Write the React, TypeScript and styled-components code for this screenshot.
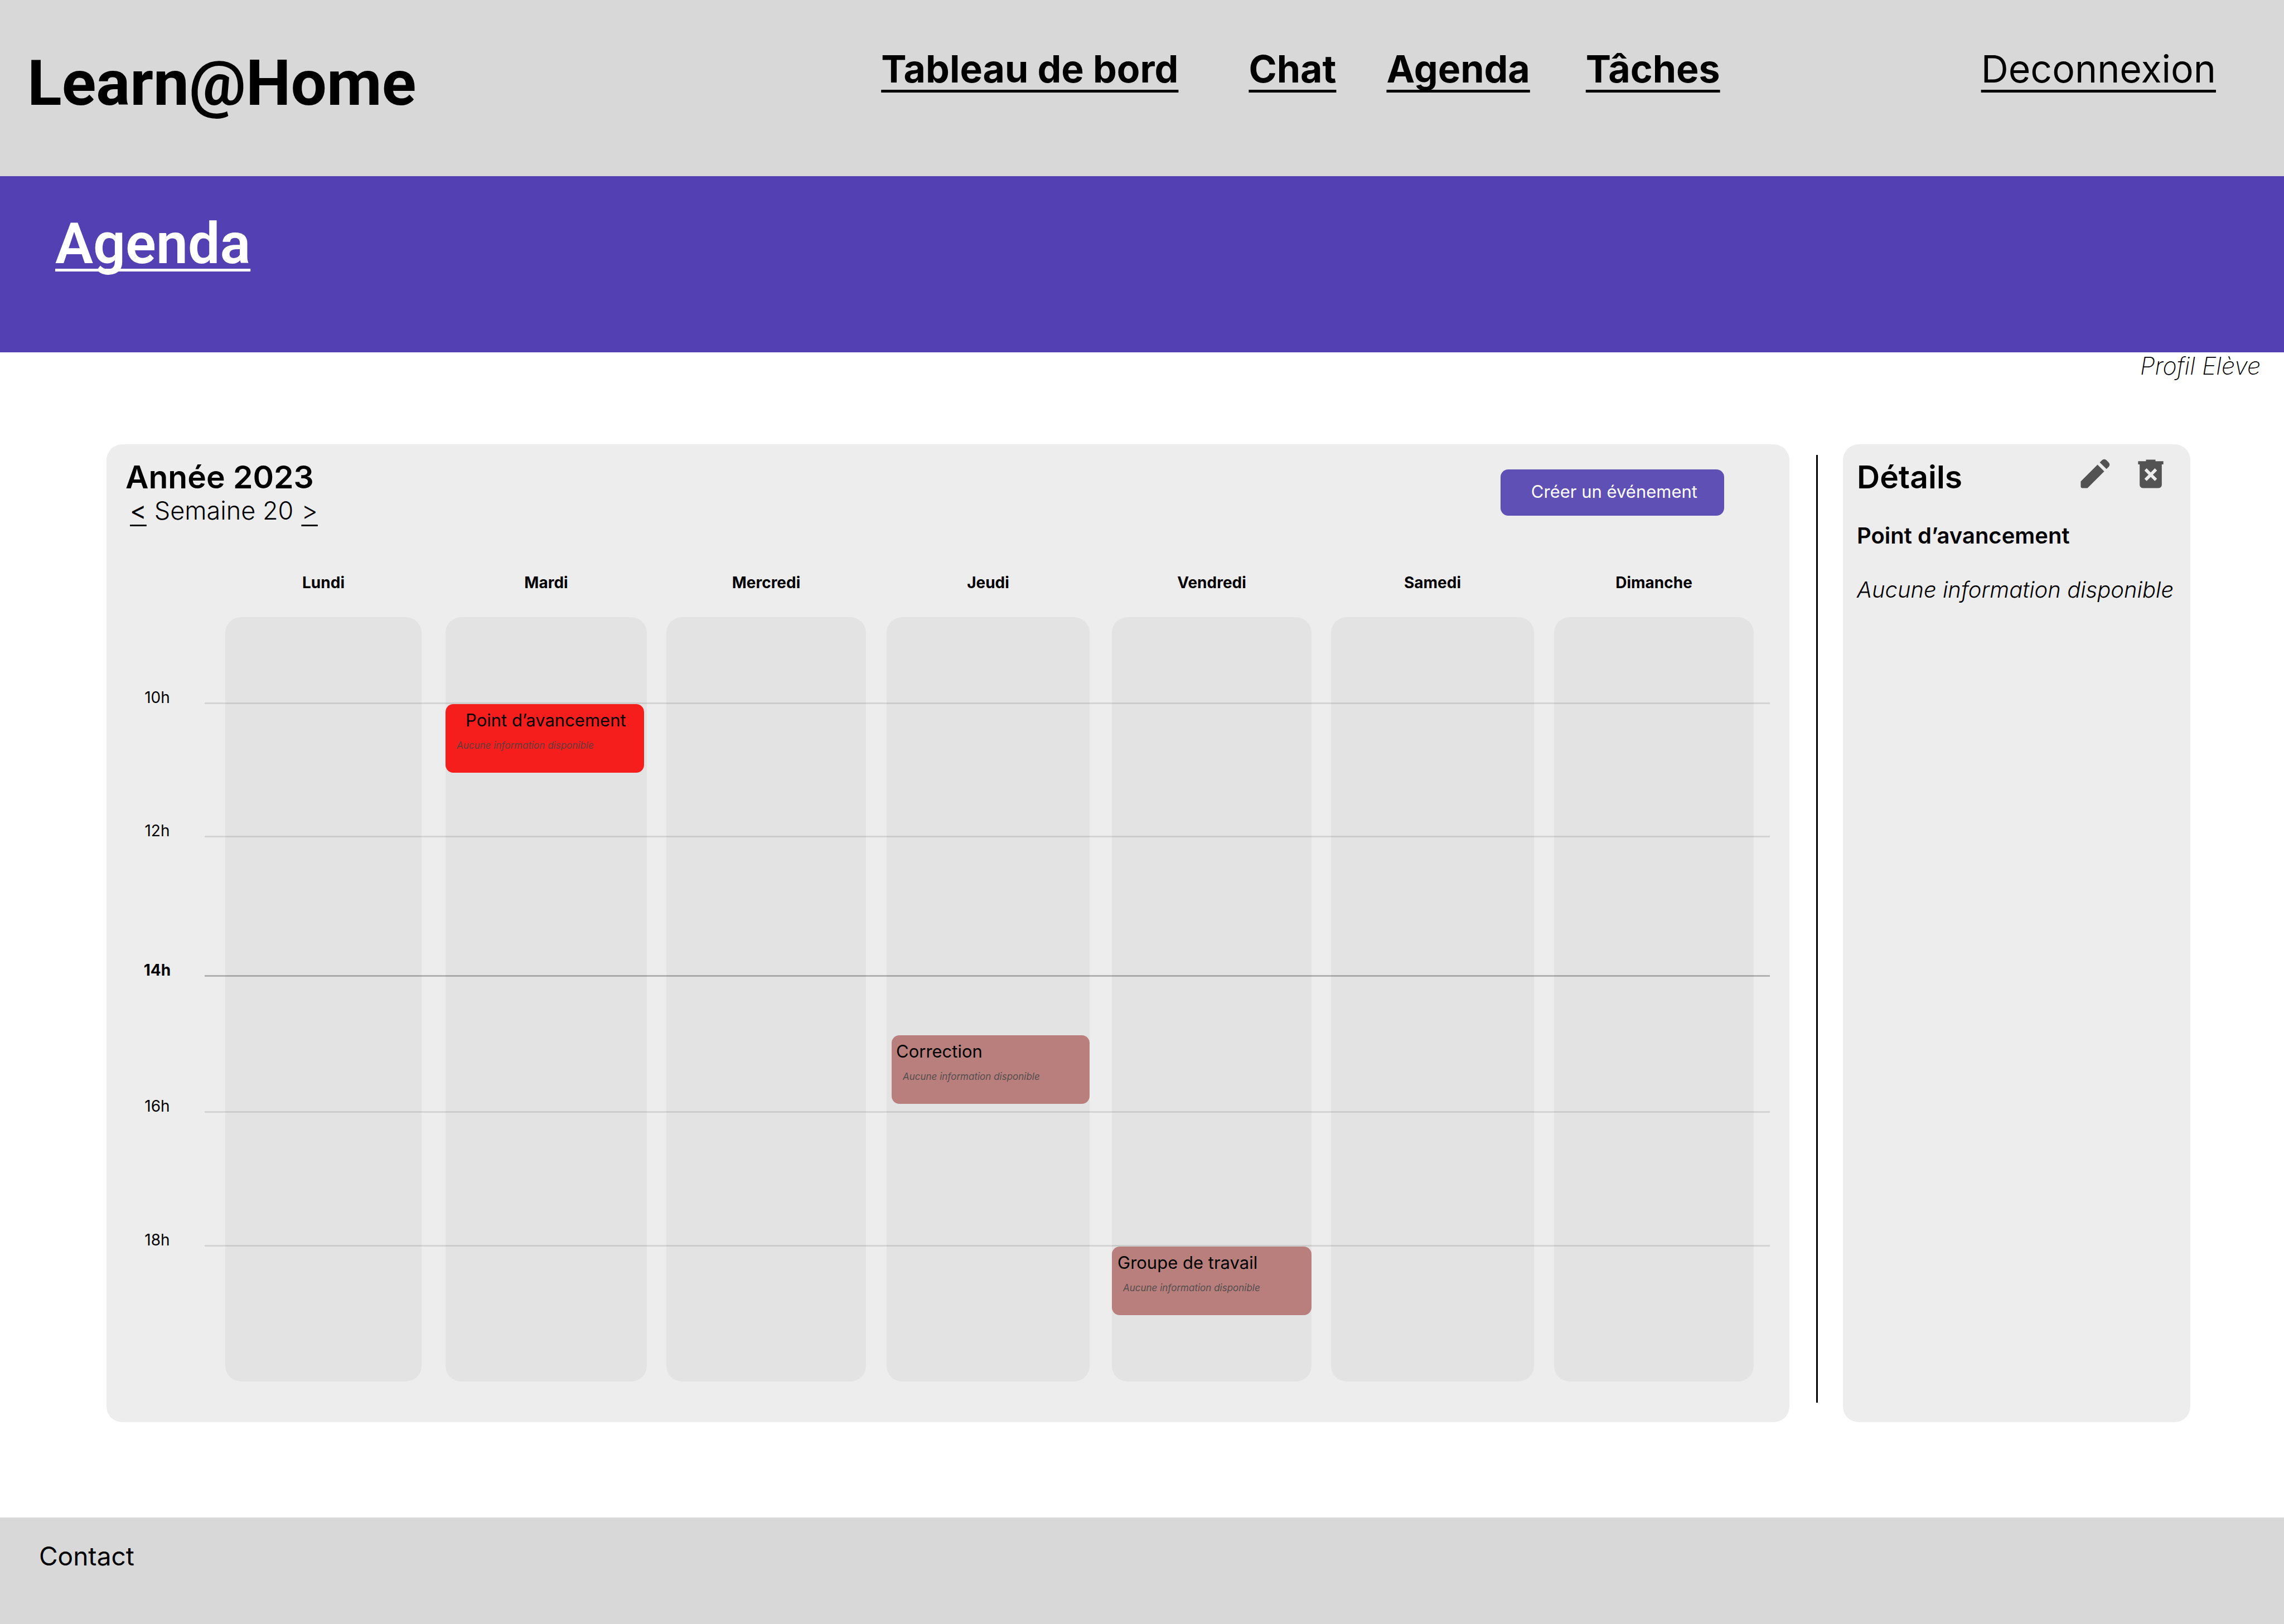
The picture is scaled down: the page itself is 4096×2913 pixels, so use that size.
import React from "react";
import styled, { createGlobalStyle } from "styled-components";

const GlobalStyle = createGlobalStyle`
  *, *::before, *::after { box-sizing: border-box; }
  html, body { margin: 0; padding: 0; }
  body {
    background: #ffffff;
    color: #000000;
    font-family: Inter, "Liberation Sans", sans-serif;
  }
  h1, h2, h3, p, ul, ol { margin: 0; padding: 0; }
  ul, ol { list-style: none; }
  a { color: inherit; }
  button { font: inherit; color: inherit; border: 0; background: none; padding: 0; cursor: pointer; }
`;

const Page = styled.div`
  display: flex;
  flex-direction: column;
  min-height: 100vh;
`;

const Header = styled.header`
  display: flex;
  align-items: flex-start;
  padding: 82px 122px 100px 49px;
  background: #d8d8d8;
`;

const Brand = styled.p`
  font-family: Roboto, sans-serif;
  font-size: 114px;
  line-height: 134px;
  font-weight: 700;
`;

const Nav = styled.nav`
  display: flex;
  margin-left: auto;
`;

const NavLink = styled.a<{ $before?: number; $plain?: boolean }>`
  margin-left: ${(p) => p.$before ?? 0}px;
  font-size: 68px;
  line-height: 82px;
  font-weight: ${(p) => (p.$plain ? 400 : 700)};
  text-decoration: underline;
  text-decoration-thickness: 5px;
  text-decoration-skip-ink: none;
  text-underline-offset: 13px;
  white-space: nowrap;
`;

const Banner = styled.div`
  padding: 61px 99px 135px;
  background: #5341b3;
  color: #ffffff;
`;

const BannerTitle = styled.h1`
  font-family: Roboto, sans-serif;
  font-size: 102px;
  line-height: 120px;
  font-weight: 600;
  text-decoration: underline;
  text-decoration-thickness: 5px;
  text-decoration-skip-ink: none;
  text-underline-offset: 10px;
`;

const Main = styled.main`
  flex: 1;
  display: flex;
  flex-direction: column;
  padding-bottom: 171px;
`;

const Profile = styled.p`
  padding-right: 42px;
  font-size: 43px;
  line-height: 48px;
  font-weight: 200;
  font-style: italic;
  text-align: right;
`;

const Planner = styled.div`
  display: flex;
  margin: 117px 168px 0 191px;
`;

const Panel = styled.section`
  border-radius: 28px;
  background: #ededed;
`;

const Calendar = styled(Panel)`
  flex: 1;
  min-width: 0;
  padding-bottom: 73px;
`;

const Divider = styled.div`
  width: 3px;
  margin: 19px 45px 35px 48px;
  background: #000000;
`;

const Toolbar = styled.div`
  display: flex;
  justify-content: space-between;
  align-items: flex-start;
  padding: 24px 117px 0 34px;
`;

const PanelTitle = styled.h2`
  font-size: 57px;
  line-height: 70px;
  font-weight: 600;
`;

const Week = styled.div`
  display: flex;
  gap: 14px;
  padding-left: 8px;
  font-size: 45px;
  line-height: 50px;
  font-weight: 300;
`;

const WeekButton = styled.button<{ $strong?: boolean }>`
  font-weight: ${(p) => (p.$strong ? 400 : 300)};
  text-decoration: underline;
  text-decoration-thickness: 3px;
  text-underline-offset: 9px;
`;

const CreateButton = styled.button`
  margin-top: 21px;
  padding: 21px 48px 24px 55px;
  border-radius: 14px;
  background: #5f50b6;
  color: #ffffff;
  font-size: 31px;
  line-height: 38px;
`;

const DayRow = styled.ul`
  display: flex;
  padding: 0 64px 0 213px;
`;

const DayNames = styled(DayRow)`
  margin: 87px 0 45px;
`;

const DayName = styled.li<{ $width: number; $before: number }>`
  flex: ${(p) => p.$width} 1 0;
  min-width: 0;
  margin-left: ${(p) => p.$before}px;
  font-size: 28px;
  line-height: 34px;
  font-weight: 700;
  text-align: center;
`;

const Board = styled.div`
  display: grid;

  > * {
    grid-area: 1 / 1;
  }
`;

const DayColumn = styled.li<{ $width: number; $before: number }>`
  position: relative;
  flex: ${(p) => p.$width} 1 0;
  min-width: 0;
  height: 1371px;
  margin-left: ${(p) => p.$before}px;
  border-radius: 28px;
  background: #e3e3e3;
`;

const Hours = styled.ol`
  z-index: 1;
  padding: 0 35px 0 66px;
  pointer-events: none;
`;

const HourRow = styled.li<{ $span: number; $now?: boolean }>`
  display: flex;
  align-items: flex-end;
  gap: 60px;
  height: ${(p) => p.$span}px;
  font-size: 28px;
  line-height: 24px;
  font-weight: ${(p) => (p.$now ? 700 : 400)};

  > time {
    width: 50px;
    text-align: center;
  }

  &::after {
    content: "";
    flex: 1;
    height: 3px;
    background: ${(p) => (p.$now ? "rgba(0, 0, 0, 0.25)" : "rgba(0, 0, 0, 0.1)")};
  }
`;

const EventCard = styled.article<{ $top: number; $left: number; $right: number; $active?: boolean }>`
  position: absolute;
  top: ${(p) => p.$top}px;
  left: ${(p) => p.$left}px;
  right: ${(p) => p.$right}px;
  padding: 10px 0 39px;
  border-radius: 14px;
  background: ${(p) => (p.$active ? "#f51e1c" : "#b97f7d")};
  white-space: nowrap;
`;

const EventTitle = styled.h3<{ $indent: number }>`
  padding-left: ${(p) => p.$indent}px;
  font-size: 31px;
  line-height: 38px;
  font-weight: 400;
`;

const EventNote = styled.p`
  margin-top: 16px;
  padding-left: 20px;
  color: rgba(60, 68, 68, 0.85);
  font-size: 17px;
  line-height: 20px;
  font-style: italic;
`;

const Details = styled(Panel)`
  width: 623px;
  flex: none;
  padding: 19px 37px 0 25px;
`;

const DetailsHead = styled.div`
  display: flex;
  align-items: flex-start;
  gap: 32px;

  > h2 {
    flex: 1;
    padding-top: 5px;
  }
`;

const IconButton = styled.button`
  display: block;
  width: 68px;
  height: 68px;
  color: #535353;

  > svg {
    display: block;
    width: 100%;
    height: 100%;
    fill: currentColor;
  }
`;

const DetailsName = styled.h3`
  margin-top: 46px;
  font-size: 40px;
  line-height: 48px;
  font-weight: 600;
`;

const DetailsText = styled.p`
  margin-top: 49px;
  font-size: 40px;
  line-height: 48px;
  font-weight: 300;
  font-style: italic;
  white-space: nowrap;
`;

const Footer = styled.footer`
  padding: 42px 70px 95px;
  background: #d8d8d8;
`;

const FooterLink = styled.a`
  display: inline-block;
  font-size: 46px;
  line-height: 54px;
  text-decoration: none;
`;

const NO_INFO = "Aucune information disponible";

type CalendarEvent = {
  title: string;
  top: number;
  left: number;
  right: number;
  indent: number;
  active?: boolean;
};

type Day = { name: string; width: number; before: number; event?: CalendarEvent };

const days: Day[] = [
  { name: "Lundi", width: 352, before: 0 },
  {
    name: "Mardi",
    width: 361,
    before: 43,
    event: { title: "Point d’avancement", top: 156, left: 0, right: 5, indent: 36, active: true },
  },
  { name: "Mercredi", width: 358, before: 35 },
  {
    name: "Jeudi",
    width: 364,
    before: 37,
    event: { title: "Correction", top: 750, left: 9, right: 0, indent: 8 },
  },
  {
    name: "Vendredi",
    width: 358,
    before: 40,
    event: { title: "Groupe de travail", top: 1129, left: 0, right: 0, indent: 10 },
  },
  { name: "Samedi", width: 364, before: 35 },
  { name: "Dimanche", width: 358, before: 36 },
];

const hours = [
  { label: "10h", span: 156 },
  { label: "12h", span: 239 },
  { label: "14h", span: 250, now: true },
  { label: "16h", span: 244 },
  { label: "18h", span: 240 },
];

const EditIcon = () => (
  <svg viewBox="0 0 24 24" aria-hidden="true">
    <path d="M19.3 8.925 15.05 4.725l1.4-1.4q.575-.575 1.413-.575t1.412.575l1.4 1.4q.575.575.6 1.388t-.55 1.387L19.3 8.925ZM17.85 10.4 7.25 21H4q-.425 0-.712-.288T3 20v-3.25l10.6-10.6 4.25 4.25Z" />
  </svg>
);

const DeleteIcon = () => (
  <svg viewBox="0 0 24 24" aria-hidden="true">
    <path d="m9.4 16.5 2.6-2.6 2.6 2.6 1.4-1.4-2.6-2.6L16 9.9l-1.4-1.4-2.6 2.6-2.6-2.6L8 9.9l2.6 2.6L8 15.1l1.4 1.4ZM7 21q-.825 0-1.413-.587T5 19V6H4V4h5V3h6v1h5v2h-1v13q0 .825-.587 1.413T17 21H7Z" />
  </svg>
);

export default function App() {
  return (
    <Page>
      <GlobalStyle />
      <Header>
        <Brand>Learn@Home</Brand>
        <Nav>
          <NavLink href="#tableau">Tableau de bord</NavLink>
          <NavLink href="#chat" $before={126}>Chat</NavLink>
          <NavLink href="#agenda" $before={90}>Agenda</NavLink>
          <NavLink href="#taches" $before={100}>Tâches</NavLink>
          <NavLink href="#deconnexion" $before={468} $plain>Deconnexion</NavLink>
        </Nav>
      </Header>

      <Banner>
        <BannerTitle>Agenda</BannerTitle>
      </Banner>

      <Main>
        <Profile>Profil Elève</Profile>
        <Planner>
          <Calendar>
            <Toolbar>
              <div>
                <PanelTitle>Année 2023</PanelTitle>
                <Week>
                  <WeekButton type="button" $strong>&lt;</WeekButton>
                  <span>Semaine 20</span>
                  <WeekButton type="button">&gt;</WeekButton>
                </Week>
              </div>
              <CreateButton type="button">Créer un événement</CreateButton>
            </Toolbar>

            <DayNames>
              {days.map((d) => (
                <DayName key={d.name} $width={d.width} $before={d.before}>{d.name}</DayName>
              ))}
            </DayNames>

            <Board>
              <DayRow>
                {days.map((d) => (
                  <DayColumn key={d.name} $width={d.width} $before={d.before}>
                    {d.event && (
                      <EventCard
                        $top={d.event.top}
                        $left={d.event.left}
                        $right={d.event.right}
                        $active={d.event.active}
                      >
                        <EventTitle $indent={d.event.indent}>{d.event.title}</EventTitle>
                        <EventNote>{NO_INFO}</EventNote>
                      </EventCard>
                    )}
                  </DayColumn>
                ))}
              </DayRow>
              <Hours>
                {hours.map((h) => (
                  <HourRow key={h.label} $span={h.span} $now={h.now}>
                    <time>{h.label}</time>
                  </HourRow>
                ))}
              </Hours>
            </Board>
          </Calendar>

          <Divider />

          <Details>
            <DetailsHead>
              <PanelTitle>Détails</PanelTitle>
              <IconButton type="button" aria-label="Modifier"><EditIcon /></IconButton>
              <IconButton type="button" aria-label="Supprimer"><DeleteIcon /></IconButton>
            </DetailsHead>
            <DetailsName>Point d’avancement</DetailsName>
            <DetailsText>{NO_INFO}</DetailsText>
          </Details>
        </Planner>
      </Main>

      <Footer>
        <FooterLink href="#contact">Contact</FooterLink>
      </Footer>
    </Page>
  );
}
